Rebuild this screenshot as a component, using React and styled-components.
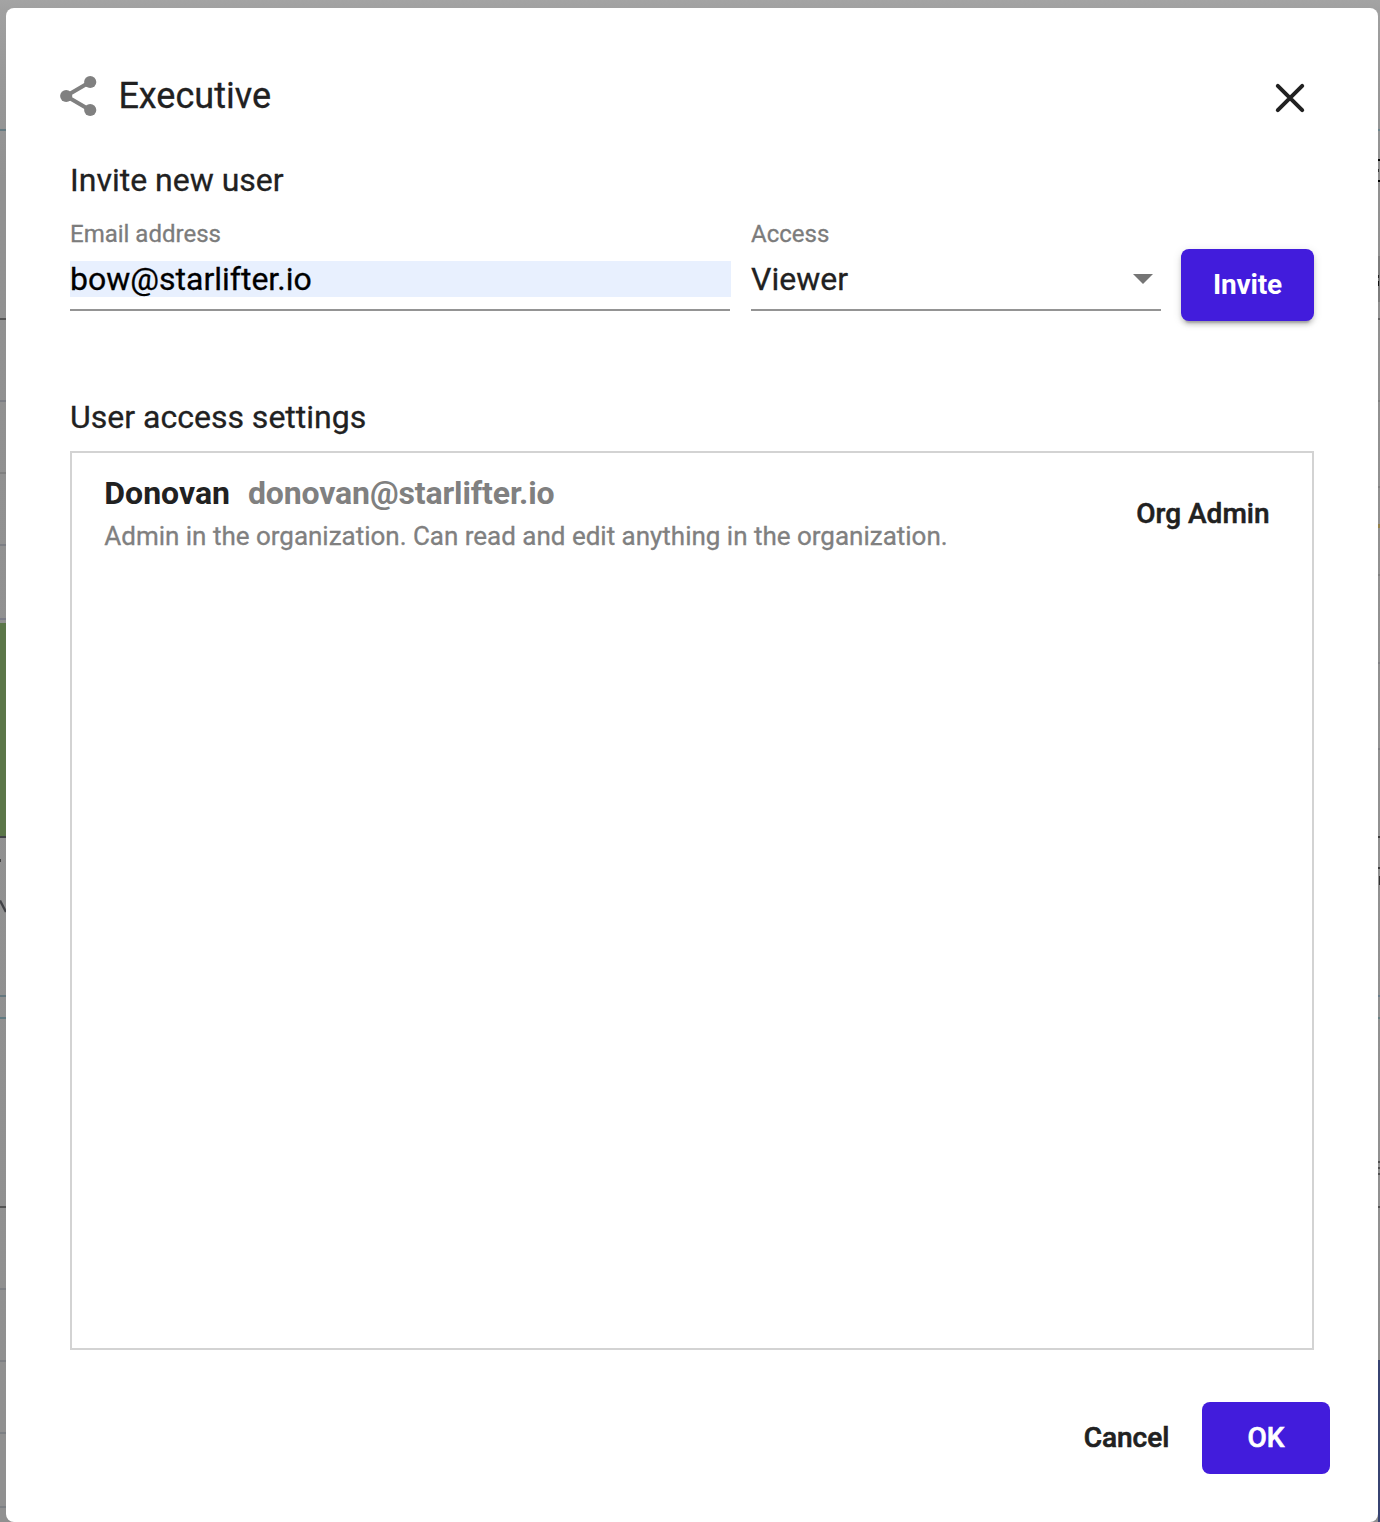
import React from "react";
import styled, { createGlobalStyle } from "styled-components";

const GlobalStyle = createGlobalStyle`
  *, *::before, *::after { box-sizing: border-box; }
  body {
    margin: 0;
    background: #929292;
    font-family: Roboto, "Liberation Sans", sans-serif;
    color: #212121;
    -webkit-font-smoothing: antialiased;
    -webkit-text-stroke: 0.3px;
  }
  button, input { font-family: inherit; }
`;

const Screen = styled.div`
  display: grid;
  grid-template-columns: 6px 1372px 2px;
  width: 1380px;
  height: 1522px;
  padding-top: 8px;
  overflow: hidden;
  background: linear-gradient(#a4a4a4 0, #a0a0a0 10px, #999 70px, #919191 180px, #909090 100%);
`;

const Edge = styled.svg`
  display: block;
  height: 1514px;
  width: ${(p) => p.$width}px;
`;

const Dialog = styled.main`
  display: flex;
  flex-direction: column;
  height: 1514px;
  background: #fff;
  border-radius: 8px;
`;

const Header = styled.header`
  display: flex;
  align-items: center;
  height: 124px;
  padding: 52px 64px 0 52px;
`;

const Title = styled.h1`
  margin: 0;
  padding-left: 20.4px;
  flex: 1;
  font-size: 36px;
  line-height: 44px;
  font-weight: 400;
`;

const IconButton = styled.button`
  display: flex;
  align-items: center;
  justify-content: center;
  width: 48px;
  height: 48px;
  margin-top: 4px;
  padding: 0;
  border: 0;
  background: none;
`;

const Body = styled.section`
  display: flex;
  flex-direction: column;
  padding: 28px 64px 0;
`;

const SectionTitle = styled.h2`
  margin: 0;
  font-size: 32px;
  line-height: 40px;
  font-weight: 400;
`;

const InviteForm = styled.form`
  display: grid;
  grid-template-columns: 661px 410px 133px;
  column-gap: 20px;
  height: 197px;
  padding-top: 20px;
`;

const Field = styled.label`
  display: flex;
  flex-direction: column;
  width: ${(p) => p.$width}px;
  height: 99px;
`;

const FieldLabel = styled.span`
  height: 41px;
  font-size: 24px;
  line-height: 28px;
  color: #7c7c7c;
`;

const Control = styled.span`
  display: flex;
  height: 50px;
  border-bottom: 2px solid #949494;
`;

const EmailInput = styled.input`
  flex: none;
  width: 661px;
  height: 36px;
  padding: 0;
  border: 0;
  outline: 0;
  background: #e8f0fe;
  color: #000;
  font-size: 32px;
  line-height: 36px;
  -webkit-text-stroke: 0.3px;
`;

const SelectValue = styled.span`
  flex: 1;
  font-size: 32px;
  line-height: 36px;
`;

const Caret = styled.span`
  width: 0;
  height: 0;
  margin: 13px 8px 0 0;
  border: 10px solid transparent;
  border-top-color: #757575;
  border-bottom: 0;
`;

const Button = styled.button`
  height: 72px;
  width: ${(p) => p.$width}px;
  padding: 0 0 0 ${(p) => (p.$primary ? 0 : 1)}px;
  border: 0;
  border-radius: 8px;
  font-size: 28px;
  line-height: 72px;
  font-weight: ${(p) => p.$weight || 500};
  letter-spacing: ${(p) => p.$tracking || 0}px;
  -webkit-text-stroke: ${(p) => (p.$weight === 700 ? 0 : 0.6)}px;
  color: ${(p) => (p.$primary ? "#fff" : "#212121")};
  background: ${(p) => (p.$primary ? "#421cdc" : "transparent")};
  box-shadow: ${(p) =>
    p.$raised
      ? "0 6px 2px -4px rgba(0,0,0,.2), 0 4px 4px rgba(0,0,0,.14), 0 2px 10px rgba(0,0,0,.12)"
      : "none"};
`;

const InviteSlot = styled.div`
  padding-top: 29px;
`;

const UserList = styled.ul`
  display: flex;
  flex-direction: column;
  height: 899px;
  margin: 14px 0 0;
  padding: 14px 42.5px 0 32.3px;
  border: 2px solid #d3d3d3;
  list-style: none;
`;

const UserRow = styled.li`
  display: flex;
  align-items: center;
  justify-content: space-between;
  height: 92px;
`;

const UserName = styled.div`
  display: flex;
  gap: 18px;
  height: 46px;
  font-size: 32px;
  line-height: 46px;
  -webkit-text-stroke: 0;
`;

const Strong = styled.span`
  color: ${(p) => (p.$muted ? "#808080" : "#212121")};
  font-weight: 700;
  letter-spacing: ${(p) => p.$tracking || 0}px;
`;

const Description = styled.p`
  margin: 0;
  font-size: 26px;
  line-height: 40px;
  color: #808080;
  letter-spacing: -0.01px;
`;

const Role = styled.span`
  padding-top: 2px;
  font-size: 28px;
  line-height: 36px;
  font-weight: 500;
  -webkit-text-stroke: 0.5px;
`;

const Footer = styled.footer`
  display: flex;
  justify-content: flex-end;
  gap: 9px;
  padding: 52px 48px 0 0;
`;

// Grid lines of the dimmed page that show beside the dialog: [y, color].
const leftLines = [
  [129, "#657b82"],
  [318, "#555"],
  [400, "#7c7e84"],
  [472, "#808080"],
  [544, "#7c7e84"],
  [618, "#7b7c87"],
  [995, "#65787f"],
  [1017, "#627b82"],
  [1206, "#555"],
  [1288, "#7e8084"],
  [1360, "#7e8084"],
  [1432, "#7d8084"],
  [1506, "#7d8084"],
];

const rightLines = [
  [129, "#6d858d"],
  [159, "#000"],
  [180, "#000"],
  [318, "#606060"],
  [400, "#808080"],
  [486, "#808080"],
  [574, "#808080"],
  [662, "#808084"],
  [748, "#808084"],
  [836, "#3c3c3c"],
  [867, "#3c3c3c"],
  [995, "#6b7e8b"],
  [1017, "#678082"],
  [1161, "#505050"],
  [1167, "#505050"],
  [1173, "#505050"],
  [1206, "#505050"],
];

function LeftEdge() {
  return (
    <Edge $width={6} viewBox="0 8 6 1514">
      {leftLines.map(([y, color]) => (
        <rect key={y} y={y} width="6" height="2" fill={color} />
      ))}
      <rect y="623" width="6" height="213" fill="#5b7648" />
      <rect y="836" width="6" height="2" fill="#414246" />
      <rect y="859" width="1" height="3" fill="#444" />
      <path d="M0 900.5 6 912" stroke="#414246" strokeWidth="2.4" />
    </Edge>
  );
}

function RightEdge() {
  return (
    <Edge $width={2} viewBox="0 8 2 1514">
      <rect y="256" width="2" height="46" fill="#7d7d7d" />
      {rightLines.map(([y, color]) => (
        <rect key={y} y={y} width="2" height="2" fill={color} />
      ))}
      <rect y="169" width="1" height="3" fill="#333" />
      <rect y="275" width="1" height="3" fill="#222" />
      <rect y="281" width="1" height="5" fill="#111" />
      <rect y="524" width="2" height="4" fill="#94814b" />
      <rect x="1" y="876" width="1" height="9" fill="#333" />
      <rect y="1360" width="2" height="162" fill="#374371" />
    </Edge>
  );
}

function ShareIcon() {
  return (
    <svg width="40" height="44" viewBox="58 74 40 44" fill="#808080">
      <path d="M90 82 66 96 90 110" fill="none" stroke="#808080" strokeWidth="4" />
      <circle cx="66.2" cy="96" r="6.1" />
      <circle cx="90.2" cy="82" r="6.1" />
      <circle cx="90.2" cy="110" r="6.1" />
    </svg>
  );
}

function CloseIcon() {
  return (
    <svg width="32" height="32" viewBox="0 0 32 32">
      <path
        d="M3.8 3.8 28.2 28.2M28.2 3.8 3.8 28.2"
        stroke="#212121"
        strokeWidth="4"
        strokeLinecap="round"
      />
    </svg>
  );
}

export default function App() {
  return (
    <>
      <GlobalStyle />
      <Screen>
        <LeftEdge />
        <Dialog>
          <Header>
            <ShareIcon />
            <Title>Executive</Title>
            <IconButton type="button" aria-label="Close">
              <CloseIcon />
            </IconButton>
          </Header>
          <Body>
            <SectionTitle>Invite new user</SectionTitle>
            <InviteForm>
              <Field $width={660}>
                <FieldLabel>Email address</FieldLabel>
                <Control>
                  <EmailInput defaultValue="bow@starlifter.io" />
                </Control>
              </Field>
              <Field as="div" $width={410}>
                <FieldLabel>Access</FieldLabel>
                <Control>
                  <SelectValue>Viewer</SelectValue>
                  <Caret />
                </Control>
              </Field>
              <InviteSlot>
                <Button type="button" $width={133} $primary $raised $weight={700} $tracking={-0.2}>
                  Invite
                </Button>
              </InviteSlot>
            </InviteForm>
            <SectionTitle>User access settings</SectionTitle>
            <UserList>
              <UserRow>
                <div>
                  <UserName>
                    <Strong>Donovan</Strong>
                    <Strong $muted $tracking={-0.13}>donovan@starlifter.io</Strong>
                  </UserName>
                  <Description>
                    Admin in the organization. Can read and edit anything in the organization.
                  </Description>
                </div>
                <Role>Org Admin</Role>
              </UserRow>
            </UserList>
          </Body>
          <Footer>
            <Button type="button" $width={134}>Cancel</Button>
            <Button type="button" $width={128} $primary>OK</Button>
          </Footer>
        </Dialog>
        <RightEdge />
      </Screen>
    </>
  );
}
